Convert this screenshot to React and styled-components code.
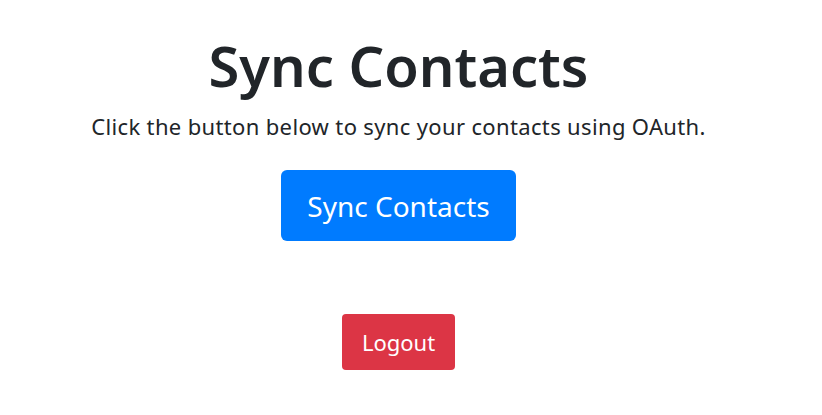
import React from 'react';
import styled, { createGlobalStyle } from 'styled-components';

const Global = createGlobalStyle`
  body {
    margin: 0;
    background: #fff;
    font-family: "Noto Sans", "Open Sans", sans-serif;
    color: #212529;
  }
`;

const Page = styled.div`
  display: flex;
  flex-direction: column;
  align-items: center;
  width: 797px;
  padding-top: 32px;
  text-align: center;
`;

const Title = styled.h1`
  margin: 0 0 11px;
  font-size: 56px;
  font-weight: 600;
  line-height: 1.2;
`;

const Lead = styled.p`
  margin: 0 0 27px;
  font-size: 22px;
  letter-spacing: 0.35px;
  line-height: 1.5;
`;

const Button = styled.button`
  font-family: inherit;
  color: #fff;
  border: 0;
  cursor: pointer;
  background: ${p => (p.$variant === 'danger' ? '#dc3545' : '#007bff')};
  font-size: ${p => (p.$size === 'lg' ? '28px' : '22px')};
  height: ${p => (p.$size === 'lg' ? '71px' : '56px')};
  padding: ${p => (p.$size === 'lg' ? '0 26px' : '0 20px')};
  border-radius: ${p => (p.$size === 'lg' ? '6px' : '4px')};
  line-height: 1;
`;

const Footer = styled.div`
  margin-top: 73px;
`;

export default function App() {
  return (
    <>
      <Global />
      <Page>
        <Title>Sync Contacts</Title>
        <Lead>Click the button below to sync your contacts using OAuth.</Lead>
        <Button $size="lg">Sync Contacts</Button>
        <Footer>
          <Button $variant="danger">Logout</Button>
        </Footer>
      </Page>
    </>
  );
}
